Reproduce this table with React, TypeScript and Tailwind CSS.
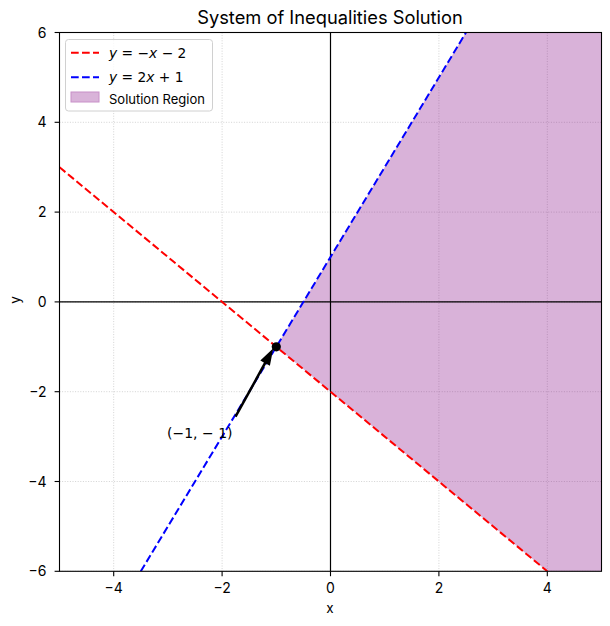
const X0 = 59.5;
const UX = 54.2;
const Y0 = 301.9;
const UY = 44.9;
const px = (x: number) => X0 + (x + 5) * UX;
const py = (y: number) => Y0 - y * UY;

const SANS = 'Inter, "Open Sans", sans-serif';
const MATH = '"DejaVu Sans", sans-serif';

const XTICKS = [-4, -2, 0, 2, 4];
const YTICKS = [-6, -4, -2, 0, 2, 4, 6];
const fmt = (n: number) => (n < 0 ? `\u2212${-n}` : `${n}`);

function arrowPoints() {
  const tail = [235.5, 416.7];
  const tip = [273.3, 348.3];
  const dx = tip[0] - tail[0];
  const dy = tip[1] - tail[1];
  const len = Math.hypot(dx, dy);
  const ux = dx / len;
  const uy = dy / len;
  const nx = -uy;
  const ny = ux;
  const headLen = 17;
  const hw = 5.5;
  const sh = 1.3;
  const bx = tip[0] - ux * headLen;
  const by = tip[1] - uy * headLen;
  const pts = [
    [tail[0] + nx * sh, tail[1] + ny * sh],
    [bx + nx * sh, by + ny * sh],
    [bx + nx * hw, by + ny * hw],
    tip,
    [bx - nx * hw, by - ny * hw],
    [bx - nx * sh, by - ny * sh],
    [tail[0] - nx * sh, tail[1] - ny * sh],
  ];
  return pts.map((p) => `${p[0].toFixed(1)},${p[1].toFixed(1)}`).join(' ');
}

export default function App() {
  const region = [
    [px(-1), py(-1)],
    [px(2.5), py(6)],
    [px(5), py(6)],
    [px(5), py(-6)],
    [px(4), py(-6)],
  ]
    .map((p) => p.join(','))
    .join(' ');

  return (
    <div className="w-[610px] h-[626px] bg-white">
      <svg width="610" height="626" viewBox="0 0 610 626">
        <defs>
          <clipPath id="axes">
            <rect x={px(-5)} y={py(6)} width={px(5) - px(-5)} height={py(-6) - py(6)} />
          </clipPath>
        </defs>

        {/* title */}
        <text x="330" y="24" textAnchor="middle" fontFamily={SANS} fontSize="18.3" fill="#000">
          System of Inequalities Solution
        </text>

        <g clipPath="url(#axes)">
          {XTICKS.map((t) => (
            <line key={`gx${t}`} x1={px(t)} x2={px(t)} y1={py(6)} y2={py(-6)} stroke="#c8c8c8" strokeWidth="0.8" strokeDasharray="1 1.6" />
          ))}
          {YTICKS.map((t) => (
            <line key={`gy${t}`} x1={px(-5)} x2={px(5)} y1={py(t)} y2={py(t)} stroke="#c8c8c8" strokeWidth="0.8" strokeDasharray="1 1.6" />
          ))}

          <polygon points={region} fill="#800080" fillOpacity="0.3" />

          <line x1={px(-5)} x2={px(5)} y1={py(0)} y2={py(0)} stroke="#000" strokeWidth="1.2" />
          <line x1={px(0)} x2={px(0)} y1={py(6)} y2={py(-6)} stroke="#000" strokeWidth="1.2" />

          <line x1={px(-5)} y1={py(3)} x2={px(4)} y2={py(-6)} stroke="#ff0000" strokeWidth="2" strokeDasharray="7.7 3.3" />
          <line x1={px(-3.5)} y1={py(-6)} x2={px(2.5)} y2={py(6)} stroke="#0000ff" strokeWidth="2" strokeDasharray="7.7 3.3" />
        </g>

        {/* annotation */}
        <polygon points={arrowPoints()} fill="#000" />
        <circle cx={px(-1)} cy={py(-1)} r="4.6" fill="#000" />
        <text x="167" y="438" fontFamily={MATH} fontSize="14" fill="#000" xmlSpace="preserve">
          ({'\u2212'}1, {'\u2212'} 1)
        </text>

        {/* spines */}
        <rect x={px(-5)} y={py(6)} width={px(5) - px(-5)} height={py(-6) - py(6)} fill="none" stroke="#000" strokeWidth="1.1" />

        {/* ticks */}
        {XTICKS.map((t) => (
          <g key={`tx${t}`}>
            <line x1={px(t)} x2={px(t)} y1={py(-6)} y2={py(-6) + 4.9} stroke="#000" strokeWidth="1.1" />
            <text x={px(t)} y="593" textAnchor="middle" fontFamily={SANS} fontSize="14" fill="#000">
              {fmt(t)}
            </text>
          </g>
        ))}
        {YTICKS.map((t) => (
          <g key={`ty${t}`}>
            <line x1={px(-5) - 4.9} x2={px(-5)} y1={py(t)} y2={py(t)} stroke="#000" strokeWidth="1.1" />
            <text x="46.5" y={py(t) + 5} textAnchor="end" fontFamily={SANS} fontSize="14" fill="#000">
              {fmt(t)}
            </text>
          </g>
        ))}

        {/* axis labels */}
        <text x="330" y="613" textAnchor="middle" fontFamily={SANS} fontSize="13.5" fill="#000">
          x
        </text>
        <text x="0" y="0" transform="translate(20 300) rotate(-90)" textAnchor="middle" fontFamily={SANS} fontSize="13.5" fill="#000">
          y
        </text>

        {/* legend */}
        <rect x="65.5" y="39.5" width="147" height="71.5" rx="3" fill="#fff" fillOpacity="0.8" stroke="#d0d0d0" strokeWidth="1" />
        <line x1="71" x2="99" y1="52.7" y2="52.7" stroke="#ff0000" strokeWidth="2" strokeDasharray="7.7 3.3" />
        <text x="109" y="57.8" fontFamily={MATH} fontSize="13.8" fill="#000">
          <tspan fontStyle="italic">y</tspan> = {'\u2212'}<tspan fontStyle="italic">x</tspan> {'\u2212'} 2
        </text>
        <line x1="71" x2="99" y1="77.3" y2="77.3" stroke="#0000ff" strokeWidth="2" strokeDasharray="7.7 3.3" />
        <text x="109" y="82.3" fontFamily={MATH} fontSize="13.8" fill="#000">
          <tspan fontStyle="italic">y</tspan> = 2<tspan fontStyle="italic">x</tspan> + 1
        </text>
        <rect x="71" y="92" width="28" height="10" fill="#d9b3d9" stroke="#c890c8" strokeWidth="1" />
        <text x="109" y="103.5" fontFamily={SANS} fontSize="13" fill="#000">
          Solution Region
        </text>
      </svg>
    </div>
  );
}
